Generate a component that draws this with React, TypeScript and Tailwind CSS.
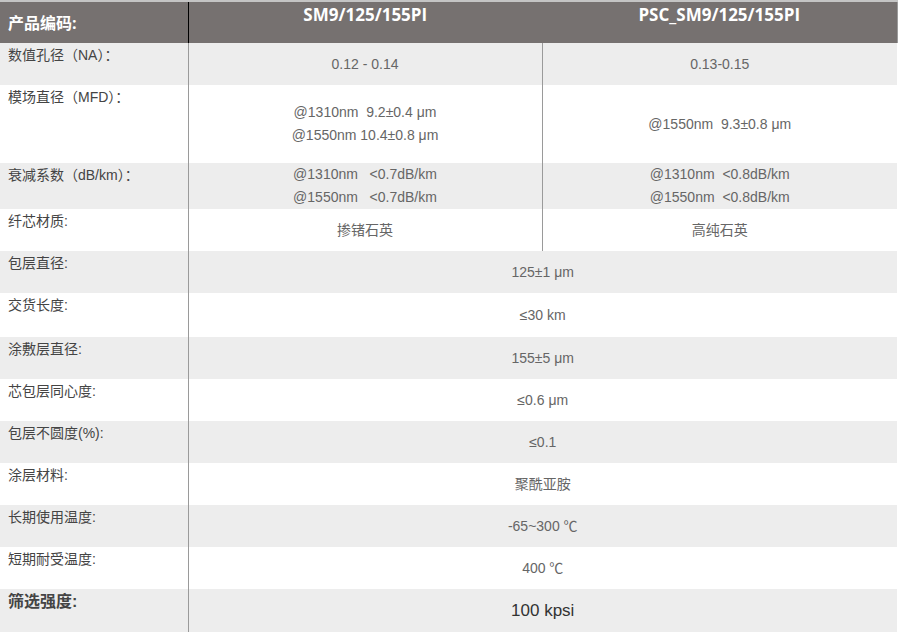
export default function App() {
  const font = "font-['Liberation_Sans','Noto_Sans_CJK_SC',sans-serif]";

  const split = [
    { label: "数值孔径（NA）：", a: ["0.12 - 0.14"], b: ["0.13-0.15"], h: "h-[42px]" },
    {
      label: "模场直径（MFD）：",
      a: ["@1310nm  9.2±0.4 μm", "@1550nm 10.4±0.8 μm"],
      b: ["@1550nm  9.3±0.8 μm"],
      h: "h-[78px]",
    },
    {
      label: "衰减系数（dB/km）：",
      a: ["@1310nm   <0.7dB/km", "@1550nm   <0.7dB/km"],
      b: ["@1310nm  <0.8dB/km", "@1550nm  <0.8dB/km"],
      h: "h-[46px]",
    },
    { label: "纤芯材质:", a: ["掺锗石英"], b: ["高纯石英"], h: "h-[42px]" },
  ];

  const merged = [
    { label: "包层直径:", v: "125±1 μm", h: "h-[42px]" },
    { label: "交货长度:", v: "≤30 km", h: "h-[44px]" },
    { label: "涂敷层直径:", v: "155±5 μm", h: "h-[42px]" },
    { label: "芯包层同心度:", v: "≤0.6 μm", h: "h-[42px]" },
    { label: "包层不圆度(%):", v: "≤0.1", h: "h-[42px]" },
    { label: "涂层材料:", v: "聚酰亚胺", h: "h-[42px]" },
    { label: "长期使用温度:", v: "-65~300 ℃", h: "h-[42px]" },
    { label: "短期耐受温度:", v: "400 ℃", h: "h-[42px]" },
  ];

  const bg = (i: number) => (i % 2 === 0 ? "bg-[#ededed]" : "bg-white");

  return (
    <div className={`w-[898px] h-[633px] overflow-hidden bg-white ${font}`}>
      <table className="w-[897px] table-fixed border-collapse border-t-2 border-[#c4c4c4]">
        <colgroup>
          <col className="w-[188px]" />
          <col className="w-[354px]" />
          <col className="w-[355px]" />
        </colgroup>
        <thead>
          <tr className="h-[42px] bg-[#767170] text-white font-['Open_Sans','Noto_Sans_CJK_SC',sans-serif]">
            <th className="border-r border-black pl-2 text-left align-middle text-[16px] font-bold">
              产品编码:
            </th>
            <th className="pb-[16px] text-center text-[17px] leading-6 font-bold">SM9/125/155PI</th>
            <th className="pb-[16px] text-center text-[17px] leading-6 font-bold border-r border-[#9c9c9c]">
              PSC_SM9/125/155PI
            </th>
          </tr>
        </thead>
        <tbody>
          {split.map((r, i) => (
            <tr key={r.label} className={`${r.h} ${bg(i)}`}>
              <td className="border-r border-[#9a9a9a] pl-2 pt-[2px] align-top text-[14px] leading-5 text-[#444]">
                {r.label}
              </td>
              <td className="border-r border-[#9a9a9a] text-center align-middle text-[14px] leading-[23px] text-[#666] whitespace-pre">
                {r.a.map((t) => (
                  <div key={t}>{t}</div>
                ))}
              </td>
              <td className="text-center align-middle text-[14px] leading-[23px] text-[#666] whitespace-pre">
                {r.b.map((t) => (
                  <div key={t}>{t}</div>
                ))}
              </td>
            </tr>
          ))}
          {merged.map((r, i) => (
            <tr key={r.label} className={`${r.h} ${bg(i)}`}>
              <td className="border-r border-[#9a9a9a] pl-2 pt-[2px] align-top text-[14px] leading-5 text-[#444]">
                {r.label}
              </td>
              <td colSpan={2} className="text-center align-middle text-[14px] text-[#666]">
                {r.v}
              </td>
            </tr>
          ))}
          <tr className="h-[43px] bg-[#ededed]">
            <td className="border-r border-[#9a9a9a] pl-2 pt-[1px] align-top text-[16px] font-bold leading-6 text-[#444]">
              筛选强度:
            </td>
            <td colSpan={2} className="text-center align-middle text-[17px] text-[#333]">
              100 kpsi
            </td>
          </tr>
        </tbody>
      </table>
    </div>
  );
}
